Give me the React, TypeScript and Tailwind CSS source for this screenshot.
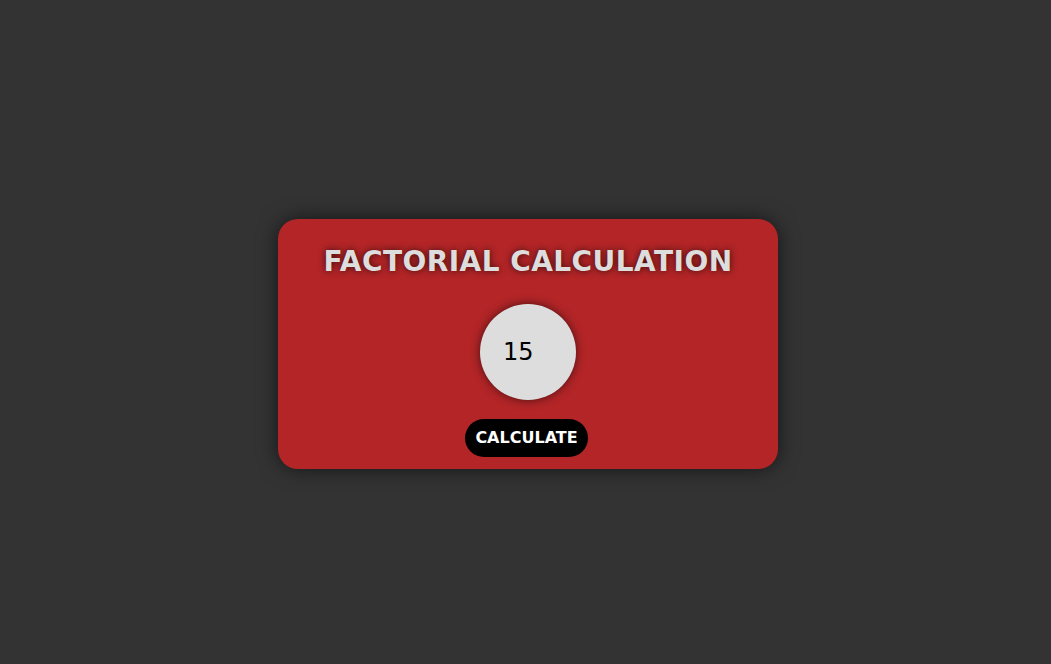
import React, { useState } from "react";

export default function App() {
  const [value, setValue] = useState("15");

  return (
    <div className="flex h-[664px] w-full items-start justify-center bg-[#333333] pt-[219px] pl-[5px] font-['DejaVu_Sans',sans-serif]">
      <div className="flex h-[250px] w-[500px] flex-col items-center rounded-[20px] bg-[#b32527] pt-[26px] shadow-[0_0_20px_rgba(0,0,0,0.6)]">
        <h1 className="text-[28px] font-bold leading-[34px] tracking-[0.45px] text-[#dddddd] [text-shadow:0_0_7px_rgba(0,0,0,0.7)]">
          FACTORIAL CALCULATION
        </h1>

        <input
          type="text"
          value={value}
          onChange={(e) => setValue(e.target.value)}
          className="mt-[25px] h-[96px] w-[96px] rounded-full bg-[#dddddd] pl-[23px] text-[24px] text-black outline-none shadow-[0_0_10px_rgba(0,0,0,0.6)]"
        />

        <button className="mt-[19px] mr-[3px] h-[38px] rounded-full bg-black px-[10px] text-[16px] font-bold text-white">
          CALCULATE
        </button>
      </div>
    </div>
  );
}
